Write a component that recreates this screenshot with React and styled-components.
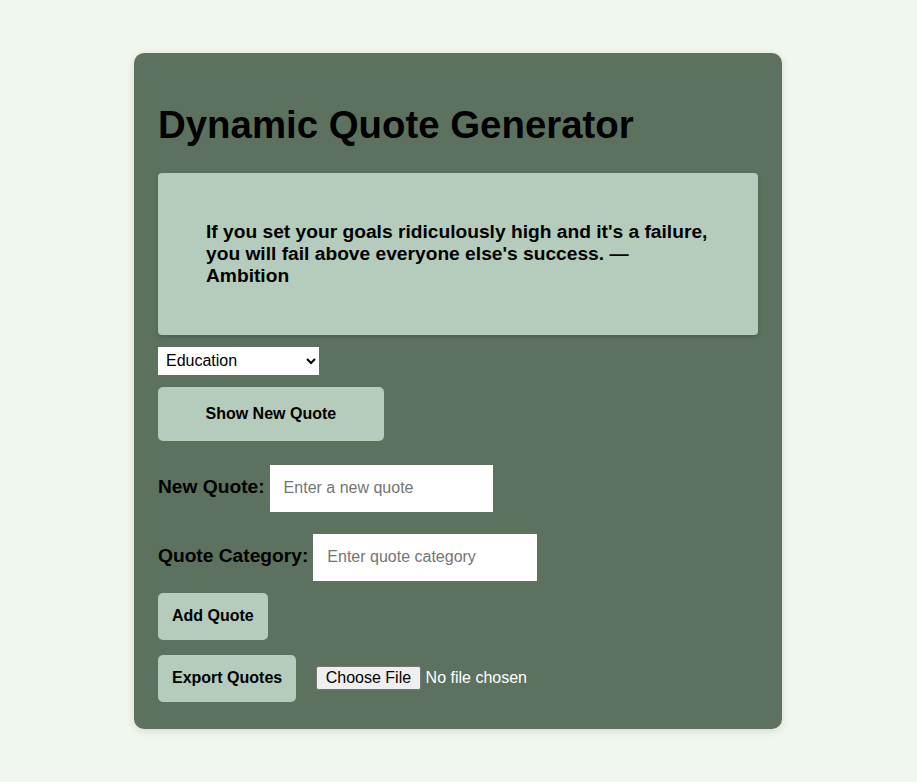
import React from "react";
import styled, { createGlobalStyle } from "styled-components";

const Global = createGlobalStyle`
  html, body { margin: 0; padding: 0; }
  body {
    background: #f0f7ef;
    font-family: "Liberation Sans", Arial, sans-serif;
    padding: 53px 1px 0 0;
    min-height: 782px;
    box-sizing: border-box;
  }
`;

const Card = styled.main`
  width: 600px;
  margin: 0 auto;
  padding: 24px 24px 27px;
  background: #5c725f;
  border-radius: 10px;
  box-shadow: 0 2px 8px rgba(0, 0, 0, 0.12);
  display: flex;
  flex-direction: column;
  align-items: flex-start;
`;

const Title = styled.h1`
  font-size: 38.4px;
  font-weight: bold;
  color: #000;
  margin: 25.7px 0 26px;
  line-height: normal;
`;

const QuoteBox = styled.div`
  align-self: stretch;
  background: #b5cbbb;
  border-radius: 4px;
  box-shadow: 0 2px 4px rgba(0, 0, 0, 0.18);
  padding: 48px;
  font-size: 19.2px;
  font-weight: bold;
  color: #000;
  line-height: normal;
`;

const Select = styled.select`
  margin-top: 12px;
  width: 161px;
  height: 28px;
  border: none;
  background: #fff;
  font-family: "Liberation Sans", Arial, sans-serif;
  font-size: 16px;
  padding: 0 4px;
  color: #000;
`;

const Button = styled.button`
  margin-top: ${(p) => p.$mt}px;
  background: #b5cbbb;
  border: none;
  border-radius: 5px;
  font-family: "Liberation Sans", Arial, sans-serif;
  font-size: 16px;
  font-weight: bold;
  color: #000;
  padding: ${(p) => (p.$wide ? "0 47.5px" : "0 14px")};
  height: ${(p) => (p.$wide ? 54 : 47)}px;
  cursor: pointer;
`;

const Field = styled.div`
  margin-top: ${(p) => p.$mt}px;
  display: flex;
  align-items: baseline;
  gap: 5px;
`;

const Label = styled.label`
  font-size: 19.2px;
  font-weight: bold;
  color: #000;
`;

const Input = styled.input`
  width: ${(p) => p.$w}px;
  height: 47px;
  box-sizing: border-box;
  border: none;
  padding: 0 14px;
  font-family: "Liberation Sans", Arial, sans-serif;
  font-size: 16px;
  background: #fff;
  outline: none;
  &::placeholder { color: #757575; }
`;

const ActionRow = styled.div`
  margin-top: 15px;
  display: flex;
  align-items: center;
  gap: 20px;
`;

const FileInput = styled.input`
  color: #fff;
  font-family: "Liberation Sans", Arial, sans-serif;
  font-size: 16px;
  &::file-selector-button {
    font-family: "Liberation Sans", Arial, sans-serif;
    font-size: 16px;
    padding: 1px 7.5px;
    margin-right: 5px;
  }
`;

export default function App() {
  return (
    <>
      <Global />
      <Card>
        <Title>Dynamic Quote Generator</Title>
        <QuoteBox>
          If you set your goals ridiculously high and it's a failure, you will fail above
          everyone else's success. — Ambition
        </QuoteBox>
        <Select defaultValue="Education">
          <option>Education</option>
          <option>Ambition</option>
        </Select>
        <Button $wide $mt={12}>Show New Quote</Button>
        <Field $mt={24}>
          <Label htmlFor="nq">New Quote:</Label>
          <Input id="nq" $w={223} placeholder="Enter a new quote" />
        </Field>
        <Field $mt={22}>
          <Label htmlFor="qc">Quote Category:</Label>
          <Input id="qc" $w={224} placeholder="Enter quote category" />
        </Field>
        <Button $mt={12}>Add Quote</Button>
        <ActionRow>
          <Button $mt={0}>Export Quotes</Button>
          <FileInput type="file" />
        </ActionRow>
      </Card>
    </>
  );
}
